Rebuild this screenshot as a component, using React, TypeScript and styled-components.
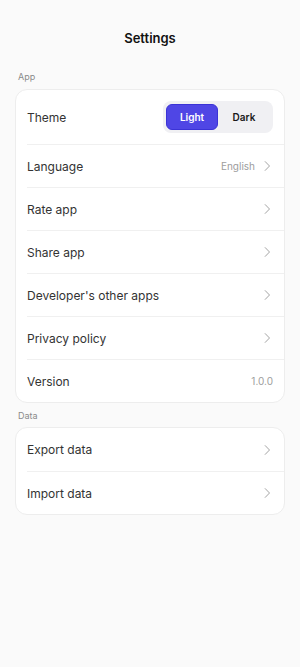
import React, { useState } from 'react';
import styled, { createGlobalStyle } from 'styled-components';

const GlobalStyle = createGlobalStyle`
  html, body {
    margin: 0;
    padding: 0;
    background: #fafafa;
  }
  body {
    font-family: Inter, "Noto Sans", sans-serif;
    -webkit-font-smoothing: antialiased;
  }
`;

const Page = styled.div`
  min-height: 667px;
  background: #fafafa;
  padding: 0 15px;
  box-sizing: border-box;
`;

const Header = styled.h1`
  margin: 0;
  padding: 30px 0 0;
  height: 63px;
  box-sizing: border-box;
  text-align: center;
  font-size: 13px;
  line-height: 16px;
  font-weight: 600;
  color: #111;
`;

const SectionLabel = styled.div<{ $compact?: boolean }>`
  display: flex;
  align-items: center;
  height: ${({ $compact }) => ($compact ? '24px' : '26px')};
  padding-left: 3px;
  font-size: 9px;
  color: #8a8a8a;
`;

const Card = styled.div`
  background: #fff;
  border: 1px solid #ededed;
  border-radius: 12px;
  overflow: hidden;
`;

const Row = styled.div<{ $tall?: boolean }>`
  display: flex;
  align-items: center;
  justify-content: space-between;
  height: ${({ $tall }) => ($tall ? '54px' : '43px')};
  margin-left: 11px;
  padding-right: 11px;
  box-sizing: border-box;
  & + & {
    border-top: 1px solid #f0f0f0;
  }
`;

const Label = styled.span`
  font-size: 12px;
  color: #333;
`;

const Right = styled.div`
  display: flex;
  align-items: center;
  gap: 6px;
`;

const Value = styled.span`
  font-size: 10px;
  color: #9d9d9d;
`;

const Segment = styled.div`
  display: flex;
  padding: 3px;
  background: #f0f0f3;
  border-radius: 8px;
`;

const SegButton = styled.button<{ $active?: boolean }>`
  width: 52px;
  height: 26px;
  border: 1px solid ${({ $active }) => ($active ? '#3b33d6' : 'transparent')};
  border-radius: 6px;
  background: ${({ $active }) => ($active ? '#4f46e5' : 'transparent')};
  color: ${({ $active }) => ($active ? '#fff' : '#1a1a1a')};
  font-family: Inter, "Noto Sans", sans-serif;
  font-size: 10px;
  font-weight: 600;
  padding: 0;
  cursor: pointer;
`;

const Chevron = () => (
  <svg width="12" height="12" viewBox="0 0 12 12" fill="none">
    <path d="M4.2 1.6 L8.5 6 L4.2 10.4" stroke="#a3a3a3" strokeWidth="1" strokeLinecap="round" strokeLinejoin="round" />
  </svg>
);

const NavRow = ({ label, value }: { label: string; value?: string }) => (
  <Row>
    <Label>{label}</Label>
    <Right>
      {value && <Value>{value}</Value>}
      <Chevron />
    </Right>
  </Row>
);

export default function App() {
  const [theme, setTheme] = useState<'light' | 'dark'>('light');

  return (
    <Page>
      <GlobalStyle />
      <Header>Settings</Header>
      <SectionLabel>App</SectionLabel>
      <Card>
        <Row $tall>
          <Label>Theme</Label>
          <Segment>
            <SegButton $active={theme === 'light'} onClick={() => setTheme('light')}>Light</SegButton>
            <SegButton $active={theme === 'dark'} onClick={() => setTheme('dark')}>Dark</SegButton>
          </Segment>
        </Row>
        <NavRow label="Language" value="English" />
        <NavRow label="Rate app" />
        <NavRow label="Share app" />
        <NavRow label="Developer's other apps" />
        <NavRow label="Privacy policy" />
        <Row>
          <Label>Version</Label>
          <Value>1.0.0</Value>
        </Row>
      </Card>
      <SectionLabel $compact>Data</SectionLabel>
      <Card>
        <NavRow label="Export data" />
        <NavRow label="Import data" />
      </Card>
    </Page>
  );
}
